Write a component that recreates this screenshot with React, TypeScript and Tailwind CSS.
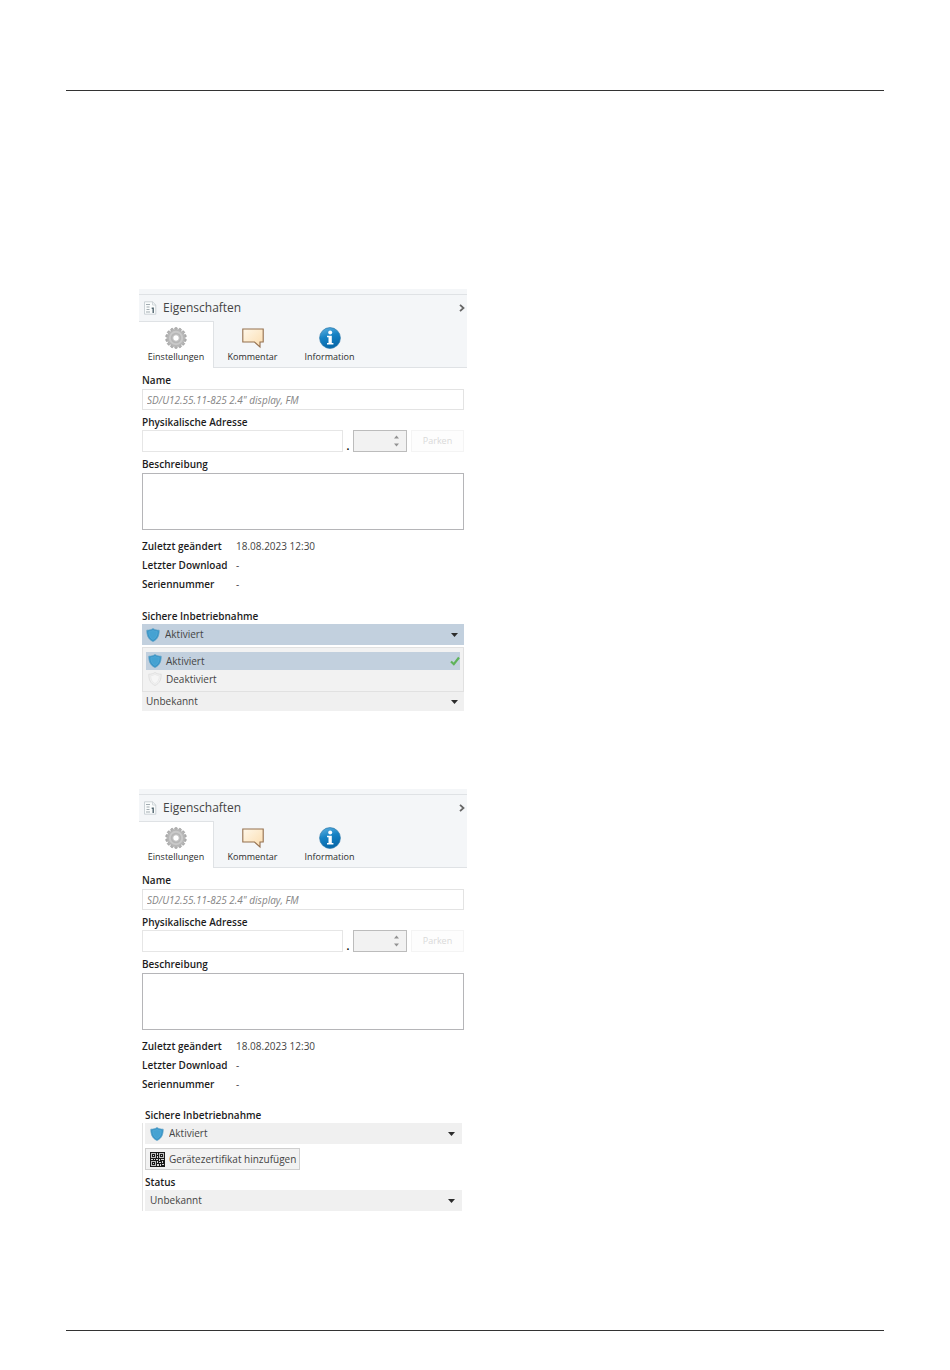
import { useId, useState } from "react"

type Mode = "Aktiviert" | "Deaktiviert"

const labelClass = "block text-[10px] leading-4 font-semibold text-[#1c1c1c]"

function GearIcon() {
  return (
    <svg className="h-[22px] w-[22px]" viewBox="0 0 22 22" aria-hidden="true">
      <g fill="#b4b4b4" stroke="#8e8e8e" strokeWidth="0.5">
        {Array.from({ length: 14 }, (_, i) => (
          <rect key={i} x="9.7" y="0.6" width="2.6" height="5" rx="0.7" transform={`rotate(${(i * 360) / 14} 11 11)`} />
        ))}
      </g>
      <circle cx="11" cy="11" r="6" fill="none" stroke="#b6b6b6" strokeWidth="5.2" />
      <circle cx="11" cy="11" r="6.2" fill="none" stroke="#c9c9c9" strokeWidth="2" />
      <circle cx="11" cy="11" r="3.3" fill="#fff" stroke="#a2a2a2" strokeWidth="0.7" />
    </svg>
  )
}

function CommentIcon() {
  return (
    <svg className="h-[22px] w-[22px]" viewBox="0 0 22 22" aria-hidden="true">
      <defs>
        <linearGradient id="bubble" x1="0" y1="0" x2="1" y2="1">
          <stop offset="0" stopColor="#fff8ea" />
          <stop offset="1" stopColor="#fbdcae" />
        </linearGradient>
      </defs>
      <path d="M0.8 2H21.2V15H18V20L12.5 15H0.8Z" fill="url(#bubble)" stroke="#94704f" strokeWidth="1.1" />
    </svg>
  )
}

function InfoIcon() {
  return (
    <svg className="h-[22px] w-[22px]" viewBox="0 0 22 22" aria-hidden="true">
      <defs>
        <linearGradient id="info" x1="0" y1="0" x2="0.3" y2="1">
          <stop offset="0" stopColor="#64b4e2" />
          <stop offset="0.5" stopColor="#1682c4" />
          <stop offset="1" stopColor="#0869ab" />
        </linearGradient>
      </defs>
      <circle cx="11" cy="11" r="10.4" fill="url(#info)" stroke="#2677ab" strokeWidth="0.7" />
      <circle cx="11.2" cy="5.5" r="2" fill="#fff" />
      <path d="M8 8.8H12.8V16H14.4V17.5H8V16H9.5V10.3H8Z" fill="#fff" />
    </svg>
  )
}

function PropertiesIcon() {
  return (
    <svg className="h-3.5 w-3.5" viewBox="0 0 14 14" aria-hidden="true">
      <path d="M1.5 0.8H9.5L12.8 4V13.2H1.5Z" fill="#fafcfc" stroke="#c6ced2" strokeWidth="0.9" />
      <path d="M9.5 0.8V4H12.8" fill="none" stroke="#c6ced2" strokeWidth="0.8" />
      <path d="M3 3.5H7M3.5 6H6.5M3.5 8.5H6.5M3 11H7" stroke="#a3adb2" />
      <path d="M8.7 7.2H10.2V12" fill="none" stroke="#52656f" strokeWidth="1.4" />
    </svg>
  )
}

function ShieldIcon({ active }: { active: boolean }) {
  return (
    <svg className="h-3.5 w-3.5 shrink-0" viewBox="0 0 14 14" aria-hidden="true">
      <path
        d="M7 0.5C5.5 1.7 3 2.3 0.8 2.2C0.7 7.5 2.4 11.5 7 13.5C11.6 11.5 13.3 7.5 13.2 2.2C11 2.3 8.5 1.7 7 0.5Z"
        fill={active ? "#3795c8" : "#f0f0f0"}
        stroke={active ? "#5a9fc4" : "#d9d9d9"}
        strokeWidth="0.7"
      />
      <path
        d="M7 2.4C5.8 3.2 4.3 3.6 2.7 3.7C2.8 7.4 4.1 10 7 11.6C9.9 10 11.2 7.4 11.3 3.7C9.7 3.6 8.2 3.2 7 2.4Z"
        fill={active ? "#45a2d2" : "#f6f6f6"}
        stroke={active ? "#5fb0da" : "#e2e2e2"}
        strokeWidth="0.5"
      />
    </svg>
  )
}

function QrIcon() {
  return (
    <svg className="h-[15px] w-[15px] shrink-0" viewBox="0 0 15 15" shapeRendering="crispEdges" aria-hidden="true">
      <path d="M0 0H15V15H0Z" fill="#191919" />
      <path
        d="M1.5 1.5H5.5V5.5H1.5ZM9.5 1.5H13.5V5.5H9.5ZM1.5 9.5H5.5V13.5H1.5Z"
        fill="none"
        stroke="#bdbdbd"
      />
      <path
        d="M3 3h1v1H3zM11 3h1v1h-1zM3 11h1v1H3zM7 1h1v2H7zM7 4h1v2H7zM1 7h2v1H1zM4 7h1v1H4zM6 7h2v1H6zM9 7h1v2H9zM11 7h3v1h-3zM7 9h1v2H7zM9 10h2v1H9zM12 9h1v2h-1zM7 12h2v2H7zM10 12h1v2h-1zM12 12h2v1h-2z"
        fill="#d4d4d4"
      />
    </svg>
  )
}

function Caret({ up = false, className = "h-1 w-[7px]" }: { up?: boolean; className?: string }) {
  return (
    <svg className={className} viewBox="0 0 7 4" fill="currentColor" aria-hidden="true">
      <path d={up ? "M0 4H7L3.5 0Z" : "M0 0H7L3.5 4Z"} />
    </svg>
  )
}

const tabs = [
  { name: "Einstellungen", icon: <GearIcon />, width: "w-[75px]" },
  { name: "Kommentar", icon: <CommentIcon />, width: "w-[77px]" },
  { name: "Information", icon: <InfoIcon />, width: "w-[77px]" },
]

const details = [
  { label: "Zuletzt geändert", value: "18.08.2023 12:30" },
  { label: "Letzter Download", value: "-" },
  { label: "Seriennummer", value: "-" },
]

function PanelHeader() {
  const [activeTab, setActiveTab] = useState("Einstellungen")

  return (
    <header className="bg-[#f4f6f8]">
      <div className="h-1.5 border-b border-[#dfe2e5]" />
      <div className="flex h-[26px] items-center pr-0.5 pl-1">
        <PropertiesIcon />
        <h2 className="ml-1.5 text-xs text-[#454545]">Eigenschaften</h2>
        <button type="button" aria-label="Einklappen" className="ml-auto text-[#666]">
          <svg className="h-2 w-1.5" viewBox="0 0 6 8" fill="none" stroke="currentColor" strokeWidth="1.8">
            <path d="M1 0.8L4.5 4L1 7.2" />
          </svg>
        </button>
      </div>
      <div className="flex h-[47px]" role="tablist">
        {tabs.map((tab) => (
          <button
            key={tab.name}
            type="button"
            role="tab"
            aria-selected={activeTab === tab.name}
            onClick={() => setActiveTab(tab.name)}
            className={`flex flex-col items-center border-t pt-[5px] text-[9px] leading-4 text-[#2c2c2c] ${tab.width} ${
              activeTab === tab.name
                ? "border-r border-[#dfe2e5] bg-white"
                : "border-b border-t-transparent border-b-[#dfe2e5]"
            }`}
          >
            {tab.icon}
            {tab.name}
          </button>
        ))}
        <div className="flex-1 border-b border-[#dfe2e5]" />
      </div>
    </header>
  )
}

function PropertyFields() {
  const id = useId()

  return (
    <div>
      <label htmlFor={`${id}-name`} className={labelClass}>
        Name
      </label>
      <input
        id={`${id}-name`}
        placeholder='SD/U12.55.11-825 2.4" display, FM'
        className="mt-px block h-[21px] w-full border border-[#e3e3e3] px-1 text-[10px] italic placeholder:text-[#858585]"
      />
      <label htmlFor={`${id}-address`} className={`mt-1 ${labelClass}`}>
        Physikalische Adresse
      </label>
      <div className="flex h-[22px]">
        <input id={`${id}-address`} className="min-w-0 flex-1 border border-[#e6e6e6] px-1 text-[10px]" />
        <span className="w-2.5 self-end text-center text-[10px] leading-3 font-bold">.</span>
        <div className="flex w-[54px] items-center border border-[#bcbcbc] bg-[#f2f2f2] pr-[7px]">
          <input aria-label="Teilnehmer" className="h-full min-w-0 flex-1 px-1 text-[10px]" />
          <div className="flex flex-col gap-1 text-[#929292]">
            <button type="button" aria-label="Erhöhen">
              <Caret up className="h-1 w-[5px]" />
            </button>
            <button type="button" aria-label="Verringern">
              <Caret className="h-1 w-[5px]" />
            </button>
          </div>
        </div>
        <button
          type="button"
          disabled
          className="ml-1 w-[53px] border border-[#f4f4f4] bg-[#fdfdfd] text-[9px] text-[#d9d9d9]"
        >
          Parken
        </button>
      </div>
      <label htmlFor={`${id}-description`} className={`mt-1 ${labelClass}`}>
        Beschreibung
      </label>
      <textarea
        id={`${id}-description`}
        className="mt-px block h-[57px] w-full resize-none border border-[#b5b5b8] p-1 text-[10px]"
      />
      <dl className="mt-[7px] grid grid-cols-[94px_1fr] text-[10px]">
        {details.map((detail) => (
          <div key={detail.label} className="col-span-2 grid h-[19px] grid-cols-subgrid items-center">
            <dt className="font-semibold text-[#1c1c1c]">{detail.label}</dt>
            <dd className="text-[#444]">{detail.value}</dd>
          </div>
        ))}
      </dl>
    </div>
  )
}

interface ModeSelectProps {
  id: string
  mode: Mode
  onChange: (mode: Mode) => void
  className: string
}

function ModeSelect({ id, mode, onChange, className }: ModeSelectProps) {
  return (
    <div className={`flex h-[21px] items-center text-[#2c2c2c] ${className}`}>
      <ShieldIcon active={mode === "Aktiviert"} />
      <select
        id={id}
        value={mode}
        onChange={(e) => onChange(e.target.value as Mode)}
        className="ml-[5px] h-full flex-1 appearance-none text-[10px] text-[#444]"
      >
        <option>Aktiviert</option>
        <option>Deaktiviert</option>
      </select>
      <Caret />
    </div>
  )
}

function StatusSelect({ id, className }: { id: string; className: string }) {
  return (
    <div className={`flex items-center bg-[#f0f0f0] text-[#2c2c2c] ${className}`}>
      <select id={id} aria-label="Status" className="h-full flex-1 appearance-none text-[10px] text-[#444]">
        <option>Unbekannt</option>
      </select>
      <Caret />
    </div>
  )
}

function OpenPanel() {
  const id = useId()
  const [mode, setMode] = useState<Mode>("Aktiviert")
  const modes: Mode[] = ["Aktiviert", "Deaktiviert"]

  return (
    <section className="w-full max-w-[328px]">
      <PanelHeader />
      <div className="px-[3px] pt-1">
        <PropertyFields />
        <label htmlFor={`${id}-mode`} className={`mt-3.5 ${labelClass}`}>
          Sichere Inbetriebnahme
        </label>
        <ModeSelect id={`${id}-mode`} mode={mode} onChange={setMode} className="bg-[#c2d0de] pr-1.5 pl-1" />
        <div
          role="listbox"
          aria-label="Sichere Inbetriebnahme"
          className="mt-0.5 border border-[#e1e1e1] bg-[#f2f2f2] px-[3px] pt-1 pb-[3px]"
        >
          {modes.map((item) => (
            <button
              key={item}
              type="button"
              role="option"
              aria-selected={item === mode}
              onClick={() => setMode(item)}
              className={`flex h-[18px] w-full items-center gap-1 pl-0.5 text-[10px] text-[#444] ${
                item === mode ? "bg-[#c2d0de]" : ""
              }`}
            >
              <ShieldIcon active={item === "Aktiviert"} />
              {item}
              {item === mode && (
                <svg className="ml-auto h-2.5 w-2.5" viewBox="0 0 10 10" fill="none" aria-hidden="true">
                  <path d="M1 5.5L3.8 8.2L9 1.5" stroke="#5fb35a" strokeWidth="2.2" />
                </svg>
              )}
            </button>
          ))}
        </div>
        <StatusSelect id={`${id}-status`} className="h-[19px] pr-1.5 pl-1" />
      </div>
    </section>
  )
}

function ClosedPanel() {
  const id = useId()
  const [mode, setMode] = useState<Mode>("Aktiviert")

  return (
    <section className="w-full max-w-[328px]">
      <PanelHeader />
      <div className="px-[3px] pt-1">
        <PropertyFields />
        <div className="mt-[13px] mr-0.5">
          <label htmlFor={`${id}-mode`} className={`pl-[3px] ${labelClass}`}>
            Sichere Inbetriebnahme
          </label>
          <div className="border-l border-[#e3e3e3] pl-0.5">
            <ModeSelect id={`${id}-mode`} mode={mode} onChange={setMode} className="bg-[#f0f0f0] pr-[7px] pl-[5px]" />
            <button
              type="button"
              className="mt-1 flex h-[22px] w-[155px] items-center gap-1 border border-[#cfcfcf] bg-[#f2f2f2] pl-1 text-[10px] whitespace-nowrap text-[#444]"
            >
              <QrIcon />
              Gerätezertifikat hinzufügen
            </button>
            <label htmlFor={`${id}-status`} className={`mt-1 ${labelClass}`}>
              Status
            </label>
            <StatusSelect id={`${id}-status`} className="h-[21px] pr-[7px] pl-[5px]" />
          </div>
        </div>
      </div>
    </section>
  )
}

export default function App() {
  return (
    <div className="bg-white px-[66px] pt-[90px] pb-10 font-['Open_Sans','Noto_Sans',sans-serif]">
      <hr className="border-[#333]" />
      <main className="flex flex-col gap-[78px] pt-[198px] pb-[119px] pl-[73px]">
        <OpenPanel />
        <ClosedPanel />
      </main>
      <hr className="border-[#333]" />
    </div>
  )
}
